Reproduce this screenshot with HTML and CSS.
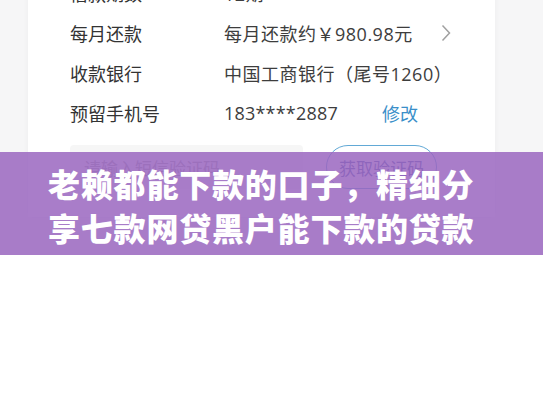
FILE: index.html
```html
<!DOCTYPE html>
<html lang="zh">
<head>
<meta charset="utf-8">
<link rel="stylesheet" href="styles.css">
</head>
<body>
<div class="shot">
  <div class="card">
    <div class="row"><span class="label">借款期数</span><span class="value">12期</span></div>
    <div class="row"><span class="label">每月还款</span><span class="value">每月还款约￥980.98元</span>
      <svg class="chev" width="12" height="18" viewBox="0 0 12 18"><path d="M2.5 1.5 L9.5 9 L2.5 16.5" fill="none" stroke="#a0a0a0" stroke-width="1.5"/></svg>
    </div>
    <div class="row"><span class="label">收款银行</span><span class="value">中国工商银行（尾号1260）</span></div>
    <div class="row"><span class="label">预留手机号</span><span class="value phone">183****2887</span><span class="edit">修改</span></div>
    <div class="code">
      <div class="input">请输入短信验证码</div>
      <div class="btn">获取验证码</div>
    </div>
  </div>
  <div class="banner">老赖都能下款的口子，精细分<br>享七款网贷黑户能下款的贷款</div>
</div>
</body>
</html>
```
FILE: styles.css
```css
html, body {
  margin: 0;
  padding: 0;
  background: #ffffff;
}
body {
  font-family: "Noto Sans CJK SC", "Noto Sans", sans-serif;
}
.shot {
  position: relative;
  height: 255px;
  background: #f6f6f7;
  overflow: hidden;
}
.card {
  margin: -27px 0 0 28px;
  width: 467px;
  background: #ffffff;
  padding: 0 0 28px 42px;
  box-sizing: border-box;
  box-shadow: 0 0 6px rgba(0,0,0,0.04);
}
.row {
  height: 40px;
  display: flex;
  align-items: center;
  font-size: 18px;
  color: #333;
}
.label {
  width: 154px;
  flex: none;
}
.value {
  font-family: "Open Sans", "Noto Sans CJK SC", sans-serif;
  color: #3d3d3d;
  letter-spacing: 0.5px;
}
.chev {
  margin-left: 27px;
}
.phone {
  width: 158px;
  letter-spacing: 0.2px;
}
.edit {
  color: #3a8fc9;
}
.code {
  margin-top: 12px;
  display: flex;
  align-items: center;
}
.input {
  width: 233px;
  height: 44px;
  background: #f6f6f6;
  border-radius: 4px;
  box-sizing: border-box;
  padding-left: 14px;
  display: flex;
  align-items: center;
  font-size: 17px;
  color: #a5a5a5;
}
.btn {
  margin-left: 23px;
  width: 111px;
  height: 44px;
  box-sizing: border-box;
  border: 1.5px solid #62a9d6;
  border-radius: 22px;
  display: flex;
  align-items: center;
  justify-content: center;
  font-size: 17px;
  color: #4a62a8;
}
.banner {
  position: absolute;
  left: 0;
  right: 0;
  top: 152px;
  height: 103px;
  box-sizing: border-box;
  padding: 9px 0 0 48px;
  background: rgba(154,102,191,0.85);
  color: #ffffff;
  font-size: 32px;
  font-weight: 900;
  line-height: 44px;
  letter-spacing: 0.8px;
  white-space: nowrap;
}
```
